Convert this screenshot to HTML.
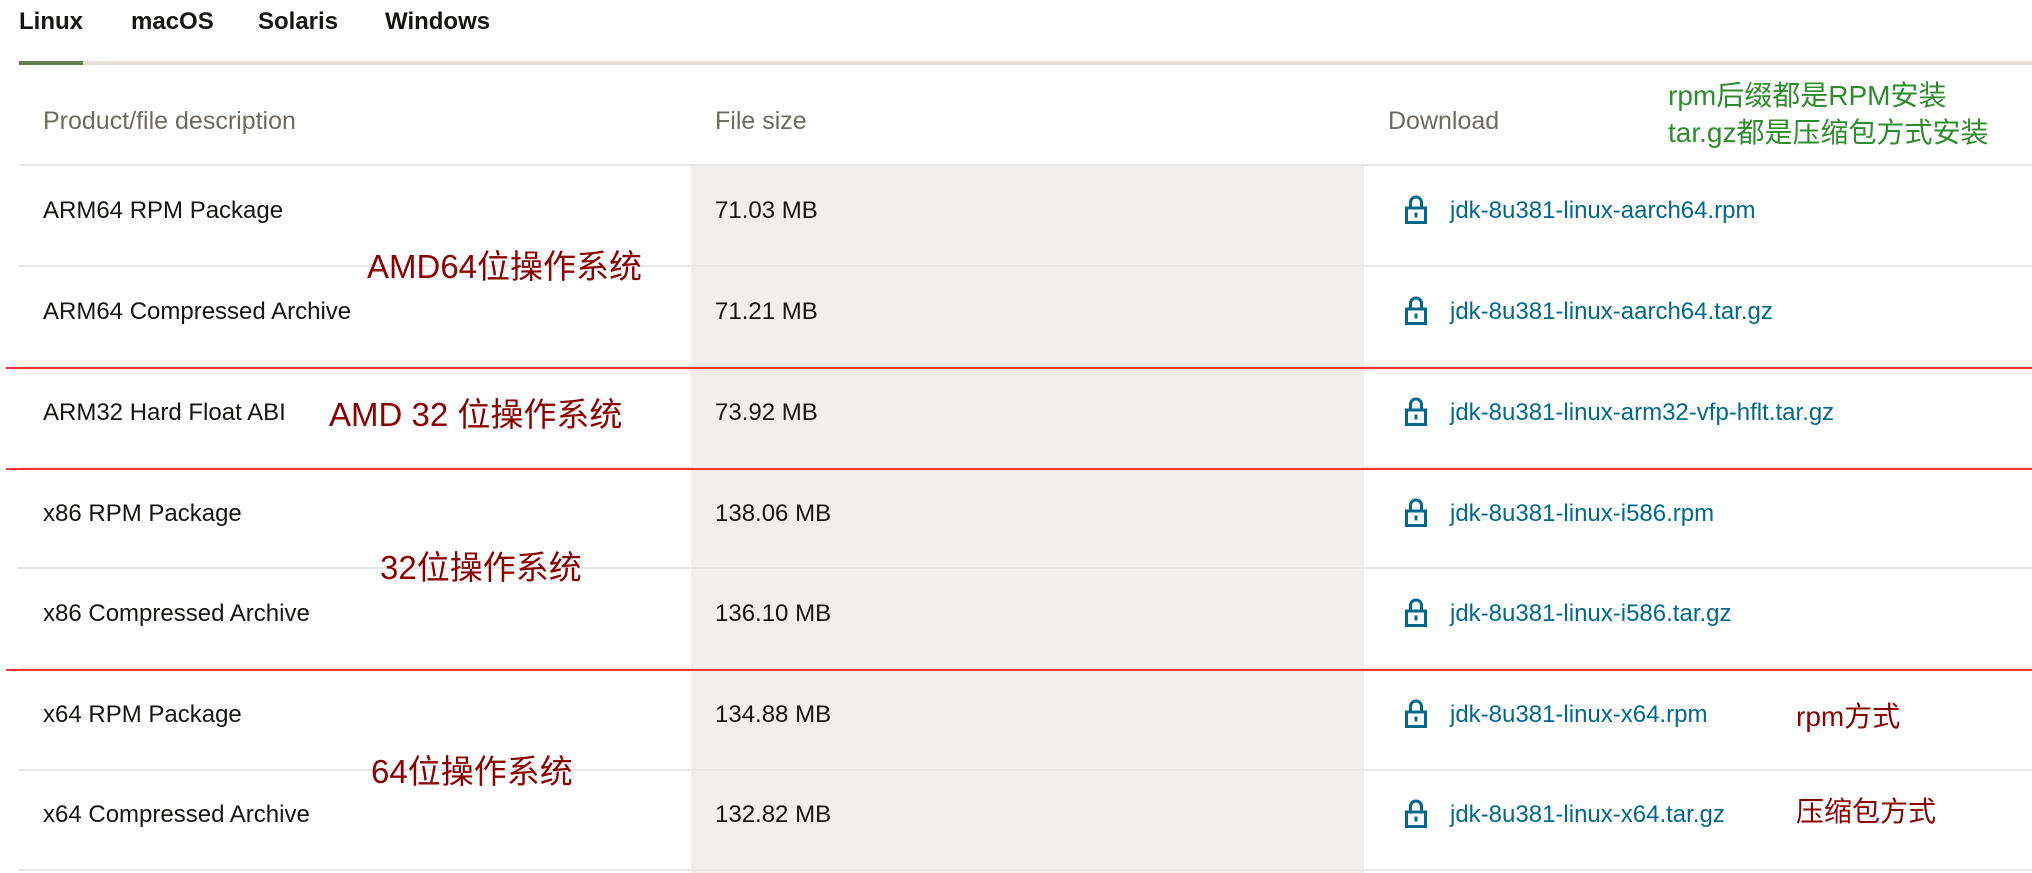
<!DOCTYPE html>
<html><head><meta charset="utf-8"><style>
body{margin:0;width:2032px;height:873px;background:#fff;position:relative;overflow:hidden;font-family:"Liberation Sans","Noto Sans CJK SC",sans-serif;}
.a{position:absolute;white-space:nowrap;line-height:1;}
.tab{font-weight:bold;font-size:24px;color:#161513;top:10px;}
.h{font-size:25px;color:#6f6964;top:109px;}
.d{font-size:24px;color:#161513;margin-top:-1px;}
.l{font-size:24px;color:#00688c;margin-top:-1px;}
.hl{position:absolute;left:19px;right:0;height:2px;background:#e6e6e6;}
.rl{position:absolute;left:6px;right:0;height:2px;background:#f33;}
.red{color:#8b0000;font-size:33px;margin-top:-1px;}
.red2{color:#8b0000;font-size:28px;margin-top:-1px;}
.grn{color:#2e8b2e;font-size:28px;margin-top:-1px;}
</style></head><body>
<div class="a tab" style="left:19px">Linux</div>
<div class="a tab" style="left:131px">macOS</div>
<div class="a tab" style="left:258px">Solaris</div>
<div class="a tab" style="left:385px">Windows</div>
<div style="position:absolute;left:19px;right:0;top:61px;height:4px;background:#e4e1dc"></div>
<div style="position:absolute;left:19px;width:64px;top:61px;height:4px;background:#5f7d4f"></div>
<div style="position:absolute;left:691px;width:673px;top:166px;height:707px;background:#f1efed"></div>
<div class="a h" style="left:43px">Product/file description</div>
<div class="a h" style="left:715px">File size</div>
<div class="a h" style="left:1388px">Download</div>
<div class="hl" style="top:164px"></div>
<div class="hl" style="top:265px"></div>
<div class="hl" style="top:366px"></div>
<div class="hl" style="top:467px"></div>
<div class="hl" style="top:567px"></div>
<div class="hl" style="top:668px"></div>
<div class="hl" style="top:769px"></div>
<div class="hl" style="top:869px"></div>
<div class="rl" style="top:367px"></div>
<div class="rl" style="top:468px"></div>
<div class="rl" style="top:669px"></div>
<svg width="0" height="0" style="position:absolute"><defs><symbol id="lk" viewBox="0 0 22 29"><path d="M5.5 13V7.5a5.5 5.5 0 0 1 11 0V13" fill="none" stroke="#00688c" stroke-width="3"/><rect x="1.5" y="13" width="19" height="14.5" fill="none" stroke="#00688c" stroke-width="3"/><rect x="9.5" y="17.5" width="3" height="5" fill="#00688c"/></symbol></defs></svg>
<div class="a d" style="left:43px;top:200px">ARM64 RPM Package</div><div class="a d" style="left:715px;top:200px">71.03 MB</div><svg class="a" style="left:1405px;top:195px" width="22" height="29"><use href="#lk"/></svg><div class="a l" style="left:1450px;top:200px">jdk-8u381-linux-aarch64.rpm</div>
<div class="a d" style="left:43px;top:301px">ARM64 Compressed Archive</div><div class="a d" style="left:715px;top:301px">71.21 MB</div><svg class="a" style="left:1405px;top:296px" width="22" height="29"><use href="#lk"/></svg><div class="a l" style="left:1450px;top:301px">jdk-8u381-linux-aarch64.tar.gz</div>
<div class="a d" style="left:43px;top:402px">ARM32 Hard Float ABI</div><div class="a d" style="left:715px;top:402px">73.92 MB</div><svg class="a" style="left:1405px;top:397px" width="22" height="29"><use href="#lk"/></svg><div class="a l" style="left:1450px;top:402px">jdk-8u381-linux-arm32-vfp-hflt.tar.gz</div>
<div class="a d" style="left:43px;top:503px">x86 RPM Package</div><div class="a d" style="left:715px;top:503px">138.06 MB</div><svg class="a" style="left:1405px;top:498px" width="22" height="29"><use href="#lk"/></svg><div class="a l" style="left:1450px;top:503px">jdk-8u381-linux-i586.rpm</div>
<div class="a d" style="left:43px;top:603px">x86 Compressed Archive</div><div class="a d" style="left:715px;top:603px">136.10 MB</div><svg class="a" style="left:1405px;top:598px" width="22" height="29"><use href="#lk"/></svg><div class="a l" style="left:1450px;top:603px">jdk-8u381-linux-i586.tar.gz</div>
<div class="a d" style="left:43px;top:704px">x64 RPM Package</div><div class="a d" style="left:715px;top:704px">134.88 MB</div><svg class="a" style="left:1405px;top:699px" width="22" height="29"><use href="#lk"/></svg><div class="a l" style="left:1450px;top:704px">jdk-8u381-linux-x64.rpm</div>
<div class="a d" style="left:43px;top:804px">x64 Compressed Archive</div><div class="a d" style="left:715px;top:804px">132.82 MB</div><svg class="a" style="left:1405px;top:799px" width="22" height="29"><use href="#lk"/></svg><div class="a l" style="left:1450px;top:804px">jdk-8u381-linux-x64.tar.gz</div>
<div class="a red" style="left:367px;top:251px">AMD64位操作系统</div>
<div class="a red" style="left:329px;top:399px">AMD 32 位操作系统</div>
<div class="a red" style="left:380px;top:552px">32位操作系统</div>
<div class="a red" style="left:371px;top:756px">64位操作系统</div>
<div class="a red2" style="left:1796px;top:704px">rpm方式</div>
<div class="a red2" style="left:1796px;top:799px">压缩包方式</div>
<div class="a grn" style="left:1668px;top:83px">rpm后缀都是RPM安装</div>
<div class="a grn" style="left:1668px;top:120px">tar.gz都是压缩包方式安装</div>
</body></html>
